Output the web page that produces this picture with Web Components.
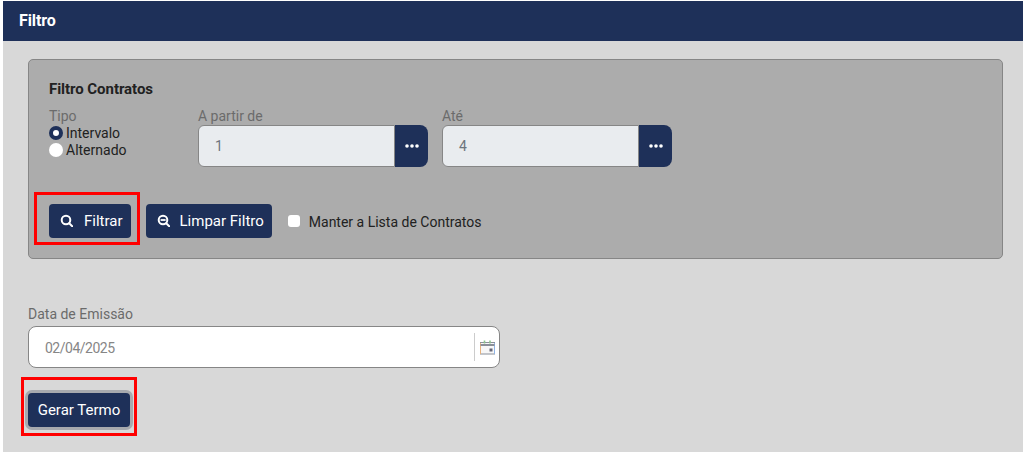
<!DOCTYPE html>
<html lang="pt">
<head>
<meta charset="utf-8">
<title>Filtro</title>
<style>
  html, body { margin: 0; background: #fff; }
  body { font-family: Roboto, "Liberation Sans", sans-serif; }
</style>
</head>
<body>
<filtro-page>
  <filtro-panel title-text="Filtro Contratos">
    <filtro-radios slot="fields"></filtro-radios>
    <filtro-lookup slot="fields" label="A partir de" value="1" style="margin-left:72px"></filtro-lookup>
    <filtro-lookup slot="fields" label="Até" value="4" style="margin-left:14px"></filtro-lookup>
    <filtro-button slot="actions" icon="search" marked>Filtrar</filtro-button>
    <filtro-button slot="actions" icon="minus">Limpar Filtro</filtro-button>
    <filtro-check slot="actions">Manter a Lista de Contratos</filtro-check>
  </filtro-panel>
  <filtro-date label="Data de Emissão" value="02/04/2025"></filtro-date>
  <filtro-generate>Gerar Termo</filtro-generate>
</filtro-page>

<script>
(function() {
  'use strict';
  const navy = '#1e3059';

  customElements.define('filtro-page', class extends HTMLElement {
    constructor() {
      super();
      this.attachShadow({mode: 'open'});
      this.shadowRoot.innerHTML = `
      <style>
      :host { display: block; width: 1023px; height: 452px; box-sizing: border-box; padding: 1px 0 0 3px; overflow: hidden; }
      .wrap { background: #d8d8d8; height: 451px; }
      header { height: 40px; background: ${navy}; color: #fff; font-size: 16px; font-weight: 700; line-height: 39px; padding-left: 16px; letter-spacing: -0.1px; }
      main { padding: 18px 20px 0 25px; }
      </style>
      <div class="wrap">
        <header>Filtro</header>
        <main><slot></slot></main>
      </div>`;
    }
  });

  customElements.define('filtro-panel', class extends HTMLElement {
    constructor() {
      super();
      this.attachShadow({mode: 'open'});
    }
    connectedCallback() {
      this.shadowRoot.innerHTML = `
      <style>
      :host { display: block; height: 200px; box-sizing: border-box; background: #acacac; border: 1px solid #868686; border-radius: 5px; padding: 21px 20px 0; }
      h2 { margin: 0; font-size: 15px; font-weight: 700; line-height: 16px; letter-spacing: -0.05px; color: #212121; }
      .fields { display: flex; margin-top: 12px; height: 58px; }
      .actions { display: flex; align-items: center; margin-top: 37px; }
      ::slotted(filtro-button) { margin-right: 15px; }
      ::slotted(filtro-check) { margin-left: 1px; }
      </style>
      <h2>${this.getAttribute('title-text')}</h2>
      <div class="fields"><slot name="fields"></slot></div>
      <div class="actions"><slot name="actions"></slot></div>`;
    }
  });

  customElements.define('filtro-radios', class extends HTMLElement {
    constructor() {
      super();
      this.attachShadow({mode: 'open'});
      this.shadowRoot.innerHTML = `
      <style>
      :host { display: block; width: 77px; font-size: 14px; color: #212121; }
      .label { color: #6b6b6b; line-height: 15px; height: 16px; }
      .row { display: flex; align-items: center; height: 17px; gap: 3px; position: relative; top: -1px; }
      i { width: 14px; height: 14px; border-radius: 50%; background: #fff; box-sizing: border-box; flex: none; }
      i.on { border: 4px solid ${navy}; }
      </style>
      <div class="label">Tipo</div>
      <div class="row"><i class="on"></i>Intervalo</div>
      <div class="row"><i></i>Alternado</div>`;
    }
  });

  customElements.define('filtro-lookup', class extends HTMLElement {
    constructor() {
      super();
      this.attachShadow({mode: 'open'});
    }
    connectedCallback() {
      this.shadowRoot.innerHTML = `
      <style>
      :host { display: block; width: 230px; font-size: 14px; }
      .label { color: #6b6b6b; line-height: 15px; height: 16px; }
      .box { display: flex; height: 42px; }
      .value { flex: 1; box-sizing: border-box; background: #e9ecef; border: 1px solid #868686; border-radius: 6px 0 0 6px; padding-left: 16px; line-height: 40px; color: #6c757d; }
      button { width: 33px; flex: none; border: 0; padding: 0; background: ${navy}; border-radius: 0 8px 8px 0; display: flex; align-items: center; justify-content: center; }
      </style>
      <div class="label">${this.getAttribute('label')}</div>
      <div class="box">
        <div class="value">${this.getAttribute('value')}</div>
        <button aria-label="Buscar">
          <svg width="14" height="4" viewBox="0 0 14 4" fill="#fff"><circle cx="2" cy="2" r="1.8"/><circle cx="7" cy="2" r="1.8"/><circle cx="12" cy="2" r="1.8"/></svg>
        </button>
      </div>`;
    }
  });

  customElements.define('filtro-button', class extends HTMLElement {
    constructor() {
      super();
      this.attachShadow({mode: 'open'});
    }
    connectedCallback() {
      const isMinus = this.getAttribute('icon') === 'minus';
      const minus = isMinus ? '<path d="M3.6 6h5" stroke-width="1.8"/>' : '';
      const marked = this.hasAttribute('marked') ? '<span class="mark"></span>' : '';
      this.shadowRoot.innerHTML = `
      <style>
      :host { display: block; position: relative; font-size: 15px; }
      button { display: flex; align-items: center; height: 34px; padding: 0 8px 0 11px; border: 0; border-radius: 4px; background: ${navy}; color: #fff; font: inherit; }
      svg { margin-right: ${isMinus ? 10 : 11}px; flex: none; position: relative; top: -1px; }
      .mark { position: absolute; left: -15px; top: -12px; width: 106px; height: 53px; box-sizing: border-box; border: 3px solid #f00; }
      </style>
      <button>
        <svg width="13" height="13" viewBox="0 0 13 13" fill="none" stroke="#fff" stroke-width="2"><circle cx="6" cy="6" r="4.3"/><path d="M9.2 9.2l3 3" stroke-linecap="round"/>${minus}</svg>
        <slot></slot>
      </button>${marked}`;
    }
  });

  customElements.define('filtro-check', class extends HTMLElement {
    constructor() {
      super();
      this.attachShadow({mode: 'open'});
      this.shadowRoot.innerHTML = `
      <style>
      :host { display: flex; align-items: center; gap: 9px; font-size: 14px; line-height: 18px; padding-top: 2px; color: #212121; }
      i { width: 12px; height: 12px; border-radius: 3px; background: #fff; flex: none; margin-top: -2px; }
      </style>
      <i></i><slot></slot>`;
    }
  });

  customElements.define('filtro-date', class extends HTMLElement {
    constructor() {
      super();
      this.attachShadow({mode: 'open'});
    }
    connectedCallback() {
      this.shadowRoot.innerHTML = `
      <style>
      :host { display: block; width: 472px; margin-top: 47px; font-size: 14px; }
      .label { color: #6b6b6b; line-height: 16px; height: 20px; }
      .box { display: flex; align-items: center; box-sizing: border-box; height: 42px; background: #fff; border: 1px solid #868686; border-radius: 8px; padding-left: 16px; color: #868686; }
      .value { flex: 1; letter-spacing: -0.5px; position: relative; top: 1px; }
      .cal { display: flex; align-items: center; justify-content: center; width: 24px; height: 28px; border-left: 1px solid #ccc; }
      </style>
      <div class="label">${this.getAttribute('label')}</div>
      <div class="box">
        <span class="value">${this.getAttribute('value')}</span>
        <span class="cal">
          <svg width="15" height="15" viewBox="0 0 15 15" fill="none">
            <rect x="0.5" y="2.5" width="14" height="11.5" fill="#f7f7f7" stroke="#8a8f98"/>
            <path d="M0.5 3v11" stroke="#e8b27c"/>
            <path d="M14.5 3v11" stroke="#8fb4e6"/>
            <path d="M0.5 5h14" stroke="#8a8f98" stroke-width="2"/>
            <path d="M4.5 0.5v3M10 0.5v3" stroke="#8fc58f" stroke-width="1.6"/>
            <rect x="9.5" y="8.5" width="3" height="3" fill="#667"/>
          </svg>
        </span>
      </div>`;
    }
  });

  customElements.define('filtro-generate', class extends HTMLElement {
    constructor() {
      super();
      this.attachShadow({mode: 'open'});
      this.shadowRoot.innerHTML = `
      <style>
      :host { display: block; position: relative; width: 102px; margin-top: 25px; font-size: 15px; }
      button { display: block; width: 102px; height: 34px; border: 0; padding: 0; border-radius: 4px; background: ${navy}; color: #fff; font: inherit; box-shadow: 0 0 0 3px #a7a9ae; }
      .mark { position: absolute; left: -7px; top: -16px; width: 116px; height: 59px; box-sizing: border-box; border: 3px solid #f00; }
      </style>
      <button><slot></slot></button>
      <span class="mark"></span>`;
    }
  });
}());
</script>
</body>
</html>
